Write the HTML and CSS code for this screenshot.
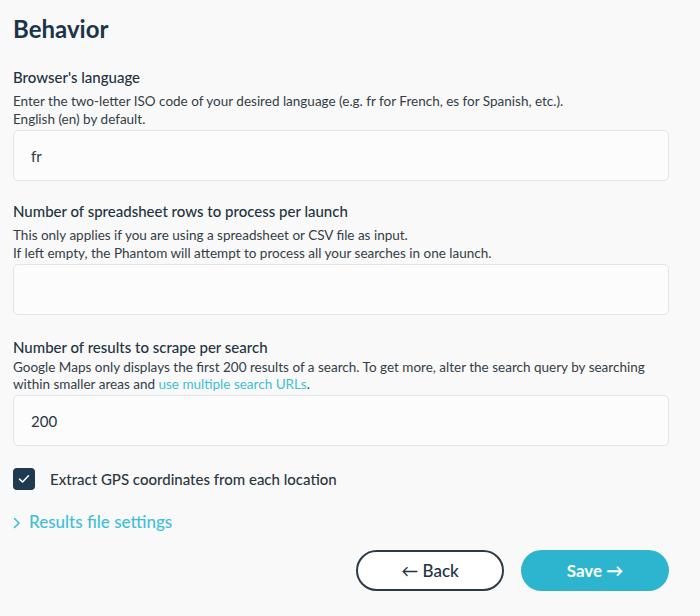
FILE: index.html
```html
<!DOCTYPE html>
<html lang="en">
<head>
<meta charset="utf-8">
<title>Behavior</title>
<link rel="stylesheet" href="styles.css">
</head>
<body>
<main class="page">
  <h1 class="title">Behavior</h1>

  <section class="field">
    <label class="label">Browser's language</label>
    <p class="desc">Enter the two-letter ISO code of your desired language (e.g. fr for French, es for Spanish, etc.).<br>English (en) by default.</p>
    <div class="input">fr</div>
  </section>

  <section class="field">
    <label class="label">Number of spreadsheet rows to process per launch</label>
    <p class="desc">This only applies if you are using a spreadsheet or CSV file as input.<br>If left empty, the Phantom will attempt to process all your searches in one launch.</p>
    <div class="input"></div>
  </section>

  <section class="field field-tight">
    <label class="label">Number of results to scrape per search</label>
    <p class="desc">Google Maps only displays the first 200 results of a search. To get more, alter the search query by searching within smaller areas and <a class="link" href="#">use multiple search URLs</a>.</p>
    <div class="input">200</div>
  </section>

  <div class="check-row">
    <span class="checkbox">
      <svg width="12" height="10" viewBox="0 0 12 10"><path d="M1.5 5.2 L4.5 8 L10.5 1.8" fill="none" stroke="#fff" stroke-width="1.6" stroke-linecap="round" stroke-linejoin="round"/></svg>
    </span>
    <span class="check-label">Extract GPS coordinates from each location</span>
  </div>

  <div class="toggle">
    <svg class="chev" width="8" height="12" viewBox="0 0 8 12"><path d="M1.5 1.5 L6 6 L1.5 10.5" fill="none" stroke="currentColor" stroke-width="1.6" stroke-linecap="round" stroke-linejoin="round"/></svg>
    <span>Results file settings</span>
  </div>

  <div class="actions">
    <button class="btn btn-back">← Back</button>
    <button class="btn btn-save">Save →</button>
  </div>
</main>
</body>
</html>
```
FILE: styles.css
```css
* { box-sizing: border-box; }
html, body { margin: 0; padding: 0; }
body {
  background: #f9f9f9;
  font-family: Lato, "Open Sans", "Liberation Sans", sans-serif;
  color: #2a3642;
}
.page {
  padding: 14px 31px 0 13px;
}
.title {
  margin: 0;
  font-size: 24px;
  line-height: 29px;
  font-weight: 700;
  color: #1b3448;
}
.field {
  margin-top: 25px;
}
.field + .field { margin-top: 21px; }
.field + .field-tight { margin-top: 23px; }
.label {
  display: block;
  font-size: 15px;
  line-height: 18px;
  font-weight: 500;
  color: #22323f;
}
.desc {
  margin: 6px 0 0;
  font-size: 13.5px;
  line-height: 18px;
  color: #333d46;
}
.field-tight .desc { line-height: 17px; margin-top: 3px; }
.link { color: #3fbfd6; text-decoration: none; }
.input {
  margin-top: 2px;
  height: 51px;
  border: 1px solid #e2e4e6;
  border-radius: 5px;
  background: #fcfcfc;
  padding: 0 17px;
  display: flex;
  align-items: center;
  font-size: 15px;
  color: #2a3642;
}
.field-tight .input { margin-top: 2px; }
.check-row {
  margin-top: 22px;
  display: flex;
  align-items: center;
  gap: 15px;
}
.checkbox {
  width: 22px;
  height: 22px;
  border-radius: 4px;
  background: #1d3a50;
  display: flex;
  align-items: center;
  justify-content: center;
}
.check-label {
  font-size: 15px;
  font-weight: 500;
  color: #2a3540;
}
.toggle {
  margin-top: 22px;
  display: flex;
  align-items: center;
  gap: 8px;
  color: #3fbfd6;
  font-size: 17px;
  line-height: 20px;
  font-weight: 500;
}
.chev { margin-top: 1px; }
.actions {
  margin-top: 18px;
  display: flex;
  justify-content: flex-end;
  gap: 17px;
}
.btn {
  width: 148px;
  height: 41px;
  border-radius: 21px;
  font-family: inherit;
  font-size: 17px;
  cursor: pointer;
}
.btn-back {
  background: #fff;
  border: 2px solid #2c3a47;
  color: #22323f;
  font-weight: 500;
}
.btn-save {
  background: #2db5cf;
  border: 0;
  color: #fff;
  font-weight: 700;
}
```
